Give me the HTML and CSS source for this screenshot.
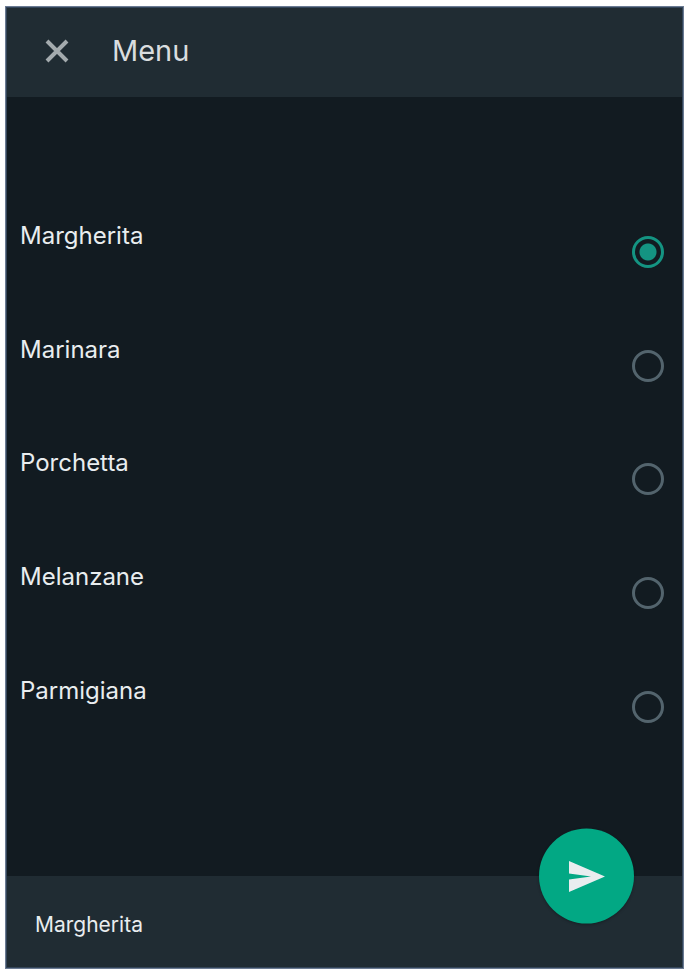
FILE: index.html
```html
<!DOCTYPE html>
<html lang="en">
  <head>
    <meta charset="UTF-8" />
    <meta name="viewport" content="width=device-width, initial-scale=1.0" />
    <title>Menu</title>
    <link rel="stylesheet" href="styles.css">
  </head>
  <body>
    <form class="panel" id="menuForm">
      <header class="header">
        <button type="button" class="btn-close" aria-label="Close">
          <svg viewBox="0 0 24 24" width="24" height="24">
            <path d="M2 2L22 22M22 2L2 22" fill="none" stroke="#a4abae" stroke-width="4" />
          </svg>
        </button>
        <h1 class="title">Menu</h1>
      </header>
      <main class="list">
        <label class="row" for="margherita">
          <span class="name">Margherita</span>
          <input type="radio" id="margherita" name="pizza" value="Margherita" checked />
        </label>
        <label class="row" for="marinara">
          <span class="name">Marinara</span>
          <input type="radio" id="marinara" name="pizza" value="Marinara" />
        </label>
        <label class="row" for="porchetta">
          <span class="name">Porchetta</span>
          <input type="radio" id="porchetta" name="pizza" value="Porchetta" />
        </label>
        <label class="row" for="melanzane">
          <span class="name">Melanzane</span>
          <input type="radio" id="melanzane" name="pizza" value="Melanzane" />
        </label>
        <label class="row" for="parmigiana">
          <span class="name">Parmigiana</span>
          <input type="radio" id="parmigiana" name="pizza" value="Parmigiana" />
        </label>
      </main>
      <footer class="footer">
        <span id="selected">Margherita</span>
        <button class="btn-send" aria-label="Send">
          <svg viewBox="0 0 36 32" width="36" height="32">
            <path d="M0 0.5L36 16L0 31.5V19L22 16L0 13Z" fill="#e9edef" />
          </svg>
        </button>
      </footer>
    </form>
    <script>
      const form = document.getElementById("menuForm");

      // Show the chosen pizza in the footer
      form.addEventListener("change", (e) => {
        document.getElementById("selected").textContent = e.target.value;
      });

      form.addEventListener("submit", (e) => {
        e.preventDefault();
      });
    </script>
  </body>
</html>
```

FILE: styles.css
```css
* {
  box-sizing: border-box;
}
body {
  display: flex;
  min-height: 100vh;
  margin: 0;
  padding: 6px 7px 5px 5px;
  background: #fff;
  font-family: Inter, "Liberation Sans", sans-serif;
  color: #e9edef;
}
.panel {
  flex: 1;
  display: flex;
  flex-direction: column;
  border: 1px solid #6b7b93;
  background: #121b21;
  box-shadow: inset 0 0 0 1px #34465a;
  padding: 1px;
}
.header {
  display: flex;
  align-items: center;
  gap: 31px;
  height: 89px;
  padding: 0 26px 4px;
  background: #202c33;
}
.btn-close {
  display: flex;
  justify-content: center;
  align-items: center;
  width: 48px;
  height: 48px;
  padding: 0;
  border: none;
  background: none;
  cursor: pointer;
}
.title {
  margin: 0;
  font-size: 29px;
  font-weight: 400;
  color: #d9dddf;
}
.list {
  flex: 1;
  display: flex;
  flex-direction: column;
  padding: 98px 18px 112px 13px;
}
.row {
  flex: 1;
  display: flex;
  justify-content: space-between;
  align-items: center;
  cursor: pointer;
}
.name {
  padding-bottom: 32px;
  font-size: 24px;
  line-height: 32px;
}
.row input {
  appearance: none;
  width: 32px;
  height: 32px;
  margin: 0;
  border: 3px solid #53646d;
  border-radius: 50%;
  cursor: pointer;
}
.row input:checked {
  border-color: #149482;
  background: radial-gradient(circle, #149482 8px, transparent 9px);
}
.footer {
  position: relative;
  display: flex;
  align-items: center;
  height: 91px;
  padding: 6px 28px 0;
  background: #202c33;
  font-size: 21px;
}
.btn-send {
  position: absolute;
  top: 0;
  right: 48px;
  display: flex;
  justify-content: center;
  align-items: center;
  width: 95px;
  height: 95px;
  padding: 0;
  border: none;
  border-radius: 50%;
  background: #02a884;
  box-shadow: 0 1px 3px rgba(0, 0, 0, 0.3);
  transform: translateY(-50%);
  cursor: pointer;
}
```
